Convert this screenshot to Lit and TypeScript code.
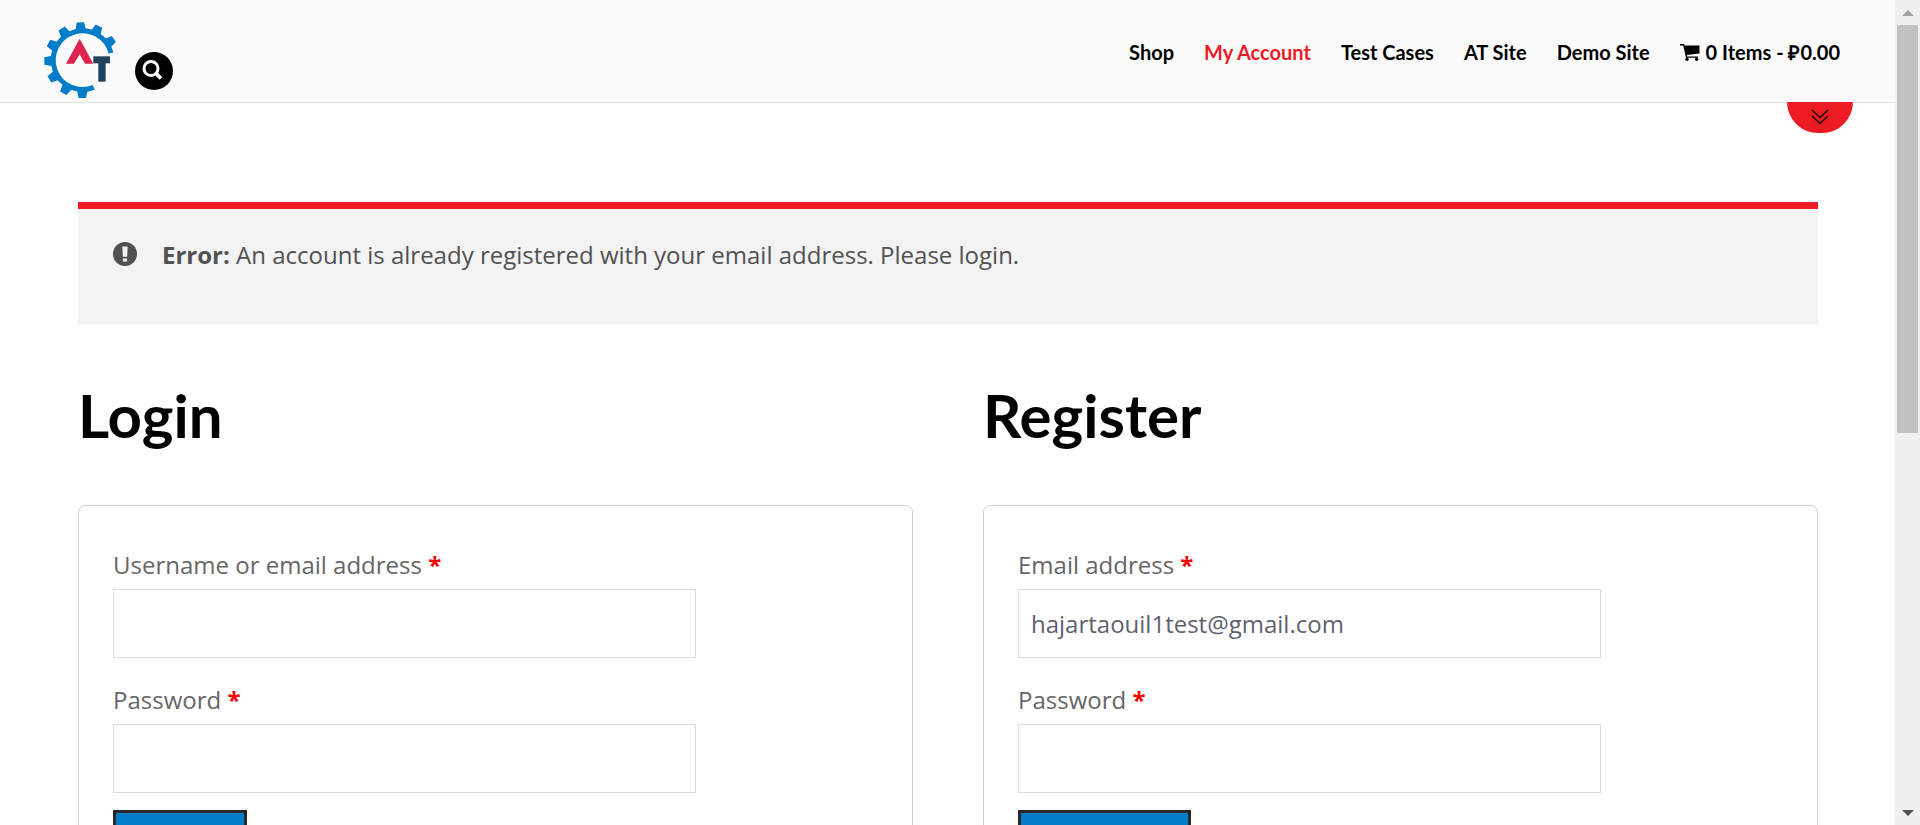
import { LitElement, html, svg, css } from "lit";
import { customElement, property } from "lit/decorators.js";

const TOOTH_ANGLES = [-180, -150, -120, -91, -63, -33, -3, 26, 56];

@customElement("site-logo")
export class SiteLogo extends LitElement {
  static styles = css`
    :host { display: block; line-height: 0; }
    .logo { width: 74px; height: 76px; display: block; }
  `;
  render() {
    return html`
      <svg class="logo" viewBox="42 37 222 228" role="img" aria-label="Automation practice site">
        <path d="M243 130 A88 88 0 1 0 191 233" fill="none" stroke="#007cc8" stroke-width="15" />
        ${TOOTH_ANGLES.map(
          (a) => svg`<path d="M140 68 L146 38 H168 L174 68 Z" fill="#007cc8" transform="rotate(${a} 157 152)" />`
        )}
        <path d="M149 87 L190 162 H165 L149 134 L132 162 H108 Z" fill="#dc2450" />
        <rect x="190" y="140" width="50" height="21" fill="#22425c" />
        <rect x="205" y="150" width="22" height="66" fill="#22425c" />
      </svg>
    `;
  }
}

@customElement("site-header")
export class SiteHeader extends LitElement {
  static styles = css`
    :host { display: block; }
    .bar {
      display: flex;
      align-items: center;
      justify-content: space-between;
      height: 102px;
      padding: 0 55px 0 44px;
      background: #fafafa;
      border-bottom: 1px solid #e1e1e1;
    }
    .brand { display: flex; align-items: flex-end; gap: 17px; padding-top: 18px; }
    .home { display: block; }
    .search {
      display: grid;
      place-items: center;
      width: 38px;
      height: 38px;
      margin-bottom: 8px;
      padding: 0 3px 1px 0;
      border: 0;
      border-radius: 50%;
      background: #000;
    }
    .nav { display: flex; align-items: center; gap: 30px; padding-top: 2px; }
    .link {
      display: flex;
      align-items: center;
      gap: 6px;
      color: #000;
      font: 700 20px/28px "Lato", "Open Sans", sans-serif;
      text-decoration: none;
      white-space: nowrap;
    }
    .current { color: #ed1c24; }
  `;
  render() {
    return html`
      <header class="bar">
        <div class="brand">
          <a class="home" href="#"><site-logo></site-logo></a>
          <button class="search" type="button" aria-label="Search">
            <svg width="21" height="21" viewBox="0 0 21 21" fill="none" stroke="#fff">
              <circle cx="9" cy="8.5" r="7" stroke-width="3" />
              <path d="M13.6 13.1 L19 18.5" stroke-width="3.8" />
            </svg>
          </button>
        </div>
        <nav class="nav">
          <a class="link" href="#">Shop</a>
          <a class="link current" href="#" aria-current="page">My Account</a>
          <a class="link" href="#">Test Cases</a>
          <a class="link" href="#">AT Site</a>
          <a class="link" href="#">Demo Site</a>
          <a class="link" href="#">
            <svg width="20" height="17" viewBox="0 0 20 17" fill="#000">
              <path d="M0 0 H4 L4.6 1.6 H19.5 V9.4 L7 11 L7.3 12.4 H18 V13.8 H6 L3.2 1.6 H0 Z" />
              <circle cx="7" cy="15.2" r="1.7" />
              <circle cx="16.6" cy="15.2" r="1.7" />
            </svg>
            <span>0 Items - ₽0.00</span>
          </a>
        </nav>
      </header>
    `;
  }
}

@customElement("form-field")
export class FormField extends LitElement {
  static styles = css`
    :host { display: block; }
    .label { display: block; color: #666; font: 400 24px/36px "Open Sans", sans-serif; }
    .required { color: #f00; font-weight: 700; }
    .input {
      display: block;
      box-sizing: border-box;
      width: 76%;
      height: 69px;
      margin-top: 6px;
      padding: 0 12px;
      border: 1px solid #dcdcdc;
      border-radius: 0;
      outline: 0;
      background: #fff;
      color: #5f5f6e;
      font: 400 24px/36px "Open Sans", sans-serif;
    }
  `;
  @property() label = "";
  @property() type = "text";
  @property() value = "";
  render() {
    return html`
      <label class="label" for="field">${this.label} <span class="required">*</span></label>
      <input class="input" id="field" type=${this.type} .value=${this.value} />
    `;
  }
}

@customElement("app-root")
export class AppRoot extends LitElement {
  static styles = css`
    :host {
      display: flex;
      height: 100vh;
      overflow: hidden;
      background: #fff;
      font-family: "Open Sans", sans-serif;
    }
    .page { position: relative; flex: 1; min-width: 0; overflow: hidden; }
    .toggle {
      position: absolute;
      top: 102px;
      right: 42px;
      display: grid;
      place-items: center;
      width: 66px;
      height: 31px;
      padding: 0 0 2px;
      border: 0;
      border-radius: 0 0 33px 33px;
      background: #ed1c24;
    }
    .content { padding: 99px 77px 0 78px; }
    .error {
      display: flex;
      align-items: flex-start;
      gap: 25px;
      margin: 0;
      padding: 28px 35px 52px;
      border-top: 7px solid #ed1c24;
      background: #f3f3f3;
      color: #515151;
      font-size: 24px;
      line-height: 36px;
    }
    .alert { flex: none; margin-top: 5px; }
    .columns { display: grid; grid-template-columns: 1fr 1fr; gap: 70px; }
    .title {
      margin: 0;
      padding: 52px 0;
      color: #000;
      font: 700 60px/76px "Lato", sans-serif;
    }
    .card {
      display: grid;
      gap: 24px;
      padding: 41px 32px 40px 34px;
      border: 1px solid #d0d0d0;
      border-radius: 7px;
    }
    .submit {
      justify-self: start;
      margin-top: -7px;
      padding: 16px 26px;
      border: 3px solid #282828;
      background: #007cc8;
      color: #fff;
      font: 700 28px/42px "Open Sans", sans-serif;
    }
    .scrollbar {
      display: flex;
      flex-direction: column;
      align-items: center;
      width: 25px;
      background: #f0f0f0;
    }
    .arrow { flex: none; margin: 10px 0 9px; }
    .track { flex: 1; width: 21px; }
    .thumb { height: 52.6%; background: #c1c1c1; }
  `;
  render() {
    return html`
      <div class="page">
        <site-header></site-header>
        <button class="toggle" type="button" aria-label="Show more">
          <svg width="18" height="16" viewBox="0 0 18 16" fill="none" stroke="#1c0406" stroke-width="1.4">
            <path d="M1 1 L9 8.6 L17 1 M1 7 L9 14.6 L17 7" />
          </svg>
        </button>
        <main class="content">
          <p class="error" role="alert">
            <svg class="alert" width="24" height="24" viewBox="0 0 24 24">
              <circle cx="12" cy="12" r="12" fill="#515151" />
              <path d="M9.3 4.5 H14.7 L14.1 14.8 H9.9 Z M9.9 16.4 H14.1 V19.6 H9.9 Z" fill="#f3f3f3" />
            </svg>
            <span><strong>Error:</strong> An account is already registered with your email address. Please login.</span>
          </p>
          <div class="columns">
            <section>
              <h2 class="title">Login</h2>
              <form class="card">
                <form-field label="Username or email address"></form-field>
                <form-field label="Password" type="password"></form-field>
                <button class="submit" type="button">Login</button>
              </form>
            </section>
            <section>
              <h2 class="title">Register</h2>
              <form class="card">
                <form-field label="Email address" type="email" value="hajartaouil1test@gmail.com"></form-field>
                <form-field label="Password" type="password"></form-field>
                <button class="submit" type="button">Register</button>
              </form>
            </section>
          </div>
        </main>
      </div>
      <div class="scrollbar" aria-hidden="true">
        <svg class="arrow" width="12" height="6" viewBox="0 0 12 6"><path d="M0 6 L6 0 L12 6 Z" fill="#a3a3a3" /></svg>
        <div class="track"><div class="thumb"></div></div>
        <svg class="arrow" width="12" height="6" viewBox="0 0 12 6"><path d="M0 0 L6 6 L12 0 Z" fill="#505050" /></svg>
      </div>
    `;
  }
}
